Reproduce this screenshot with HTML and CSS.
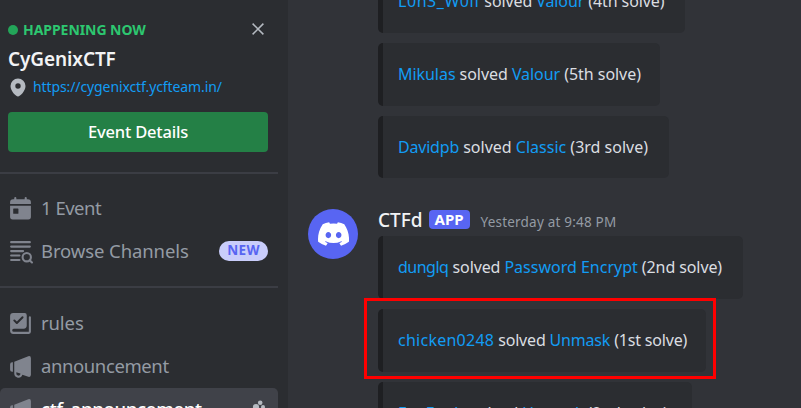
FILE: index.html
```html
<!DOCTYPE html>
<html lang="en">
<head>
<meta charset="utf-8">
<title>CyGenixCTF</title>
<link rel="stylesheet" href="styles.css">
</head>
<body>
<div class="app">
  <aside class="sidebar">
    <section class="event">
      <div class="event-status">
        <span class="dot"></span><span class="live">HAPPENING NOW</span>
        <svg class="close" viewBox="0 0 12 12"><path d="M.6.6l10.8 10.8M11.4.6L.6 11.4" fill="none" stroke="#b5bac1" stroke-width="1.5"/></svg>
      </div>
      <h2 class="event-name">CyGenixCTF</h2>
      <div class="event-place">
        <svg class="pin" viewBox="0 0 16 18"><path fill="#b5bac1" fill-rule="evenodd" d="M8 0a7.5 7.5 0 0 0-7.5 7.5C.5 12.600 6 18 8 18s7.500-5.400 7.500-10.500A7.500 7.500 0 0 0 8 0zm0 4.800a2.700 2.700 0 1 1 0 5.400 2.700 2.700 0 0 1 0-5.400z"/></svg>
        <a class="place-link">https://cygenixctf.ycfteam.in/</a>
      </div>
      <button class="details"><span>Event Details</span></button>
    </section>
    <nav class="group group-top">
      <div class="row">
        <svg class="icon" viewBox="0 0 24 24"><path fill="currentColor" fill-rule="evenodd" d="M7 1a1 1 0 0 1 1 1v1h8V2a1 1 0 1 1 2 0v1h1A3 3 0 0 1 22 6V7.700H2V6A3 3 0 0 1 5 3h1V2a1 1 0 0 1 1-1zM2 9.300h20V20a2.500 2.500 0 0 1-2.500 2.500h-15A2.500 2.500 0 0 1 2 20zM5.500 12a.5.5 0 0 0-.5.5v4a.5.5 0 0 0 .5.5h4a.5.5 0 0 0 .5-.5v-4a.5.5 0 0 0-.5-.5z"/></svg>
        <span class="label label-events">1 Event</span>
      </div>
      <div class="row">
        <svg class="icon" viewBox="0 0 24 24"><path d="M3 3h18M3 7.300h18M3 11.600h11.500M3 15.900h8M3 20.200h8" fill="none" stroke="currentColor" stroke-width="2" stroke-linecap="round"/><circle cx="18" cy="17.500" r="4" fill="none" stroke="currentColor" stroke-width="2"/><path d="M20.800 20.300L23 22.500" stroke="currentColor" stroke-width="2" stroke-linecap="round"/></svg>
        <span class="label label-browse">Browse Channels</span><span class="new">NEW</span>
      </div>
    </nav>
    <nav class="group group-channels">
      <div class="row">
        <svg class="icon" viewBox="0 0 24 24"><path fill="currentColor" fill-rule="evenodd" d="M5 2a3 3 0 0 0-3 3v14a3 3 0 0 0 3 3h15a2 2 0 0 0 2-2V6a1 1 0 1 0-2 0v14H5.500a1.500 1.500 0 0 1 0-3H15a3 3 0 0 0 3-3V4a2 2 0 0 0-2-2zm9.700 4.700a1 1 0 0 0-1.400-1.400L8.500 10.100 6.700 8.300a1 1 0 0 0-1.400 1.400l2.500 2.500a1 1 0 0 0 1.400 0z"/></svg>
        <span class="label label-rules">rules</span>
      </div>
      <div class="row">
        <svg class="icon" viewBox="0 0 24 24"><path fill="currentColor" fill-rule="evenodd" d="M19.500 2.100A2 2 0 0 1 22 4v16a2 2 0 0 1-2.500 1.900L13.800 20A4 4 0 0 1 6 18.800V7.500zM8 17.600v1.200a2 2 0 0 0 3.900.6v-.6zM4.700 8v9H4a2 2 0 0 1-2-2v-5a2 2 0 0 1 2-2z"/></svg>
        <span class="label label-ann">announcement</span>
      </div>
      <div class="row row-active">
        <svg class="icon" viewBox="0 0 24 24"><path fill="currentColor" fill-rule="evenodd" d="M19.500 2.100A2 2 0 0 1 22 4v16a2 2 0 0 1-2.500 1.900L13.800 20A4 4 0 0 1 6 18.800V7.500zM8 17.600v1.200a2 2 0 0 0 3.900.6v-.6zM4.700 8v9H4a2 2 0 0 1-2-2v-5a2 2 0 0 1 2-2z"/></svg>
        <span class="label label-active">ctf_announcement</span>
        <svg class="invite" viewBox="0 0 18 20"><g fill="#b5bac1"><circle cx="6" cy="7" r="3.100"/><circle cx="10.200" cy="2.700" r="2.300"/><circle cx="13" cy="7" r="2"/><path d="M0 17a6 6 0 0 1 12 0z"/></g></svg>
      </div>
    </nav>
  </aside>
  <main class="chat">
    <div class="embeds embeds-first">
      <div class="embed e1"><p><a>L0n3_W0lf</a> solved <a>Valour</a> (4th solve)</p></div>
      <div class="embed e2"><p><a>Mikulas</a> solved <a>Valour</a> (5th solve)</p></div>
      <div class="embed e3"><p><a>Davidpb</a> solved <a>Classic</a> (3rd solve)</p></div>
    </div>
    <article class="message">
      <div class="avatar"><svg viewBox="0 0 127 97"><path fill="#fff" d="M107.700 8.070A105 105 0 0 0 81.470 0a72 72 0 0 0-3.360 6.830 97.700 97.700 0 0 0-29.110 0A72 72 0 0 0 45.640 0a106 106 0 0 0-26.250 8.090C2.790 32.650-1.710 56.600.54 80.210a105.700 105.700 0 0 0 32.170 16.150 77.700 77.700 0 0 0 6.890-11.110 68.400 68.400 0 0 1-10.850-5.180c.91-.66 1.800-1.340 2.660-2a75.600 75.600 0 0 0 64.320 0c.87.71 1.760 1.390 2.660 2a68.700 68.700 0 0 1-10.870 5.190 77 77 0 0 0 6.890 11.100 105.300 105.300 0 0 0 32.190-16.140c2.640-27.380-4.510-51.110-18.900-72.150zM42.450 65.690c-6.270 0-11.450-5.690-11.450-12.690s5-12.740 11.430-12.740S54 46 53.890 53s-5.050 12.690-11.440 12.690zm42.240 0c-6.280 0-11.440-5.690-11.440-12.690s5-12.740 11.440-12.740S96.230 46 96.120 53s-5.040 12.690-11.430 12.690z"/></svg></div>
      <div class="message-body">
        <header class="message-head"><span class="author">CTFd</span><span class="app-tag">APP</span><time>Yesterday at 9:48 PM</time></header>
        <div class="embeds">
          <div class="embed e4"><p><a>dunglq</a> solved <a>Password Encrypt</a> (2nd solve)</p></div>
          <div class="embed e5"><p><a>chicken0248</a> solved <a>Unmask</a> (1st solve)</p><span class="highlight"></span></div>
          <div class="embed e6"><p><a>FunFrydy</a> solved <a>Unmask</a> (2nd solve)</p></div>
        </div>
      </div>
    </article>
  </main>
</div>
</body>
</html>
```
FILE: styles.css
```css
* { box-sizing: border-box; }
body { margin: 0; background: #313338; font-family: "Noto Sans", sans-serif; color: #dbdee1; }
.app { display: flex; width: 801px; height: 408px; overflow: hidden; }
.sidebar { flex: 0 0 288px; background: #2b2d31; height: 408px; overflow: hidden; }
.event { padding: 20px 10px 0 8px; height: 174px; border-bottom: 2px solid #3b3d44; width: 278px; }
.event-status { display: flex; align-items: center; height: 20px; }
.dot { width: 10px; height: 10px; border-radius: 50%; background: #23a559; margin-right: 5px; }
.live { font-size: 14px; font-weight: 700; color: #2dc770; letter-spacing: -.05px; margin-top: -2px; }
.close { width: 12px; height: 12px; margin-left: auto; margin-right: 4px; position: relative; top: -1px; }
.event-name { margin: 6px 0 0; font-size: 19px; line-height: 26px; font-weight: 600; color: #f2f3f5; letter-spacing: -.1px; }
.event-place { display: flex; align-items: center; height: 26px; margin-top: 2px; }
.pin { width: 16px; height: 19px; margin: 0 7px 0 2px; }
a { color: #129cf4; }
.place-link { font-size: 14px; letter-spacing: -.1px; margin-top: -2px; }
.details { display: block; width: 260px; height: 40px; margin: 12px 0 0; padding: 0 0 2px; border: 0; border-radius: 4px; background: #248046; color: #fff; font: 500 16.500px "Noto Sans", sans-serif; letter-spacing: -.2px; }
.group { width: 278px; }
.group-top { height: 114px; padding-top: 13px; border-bottom: 2px solid #3b3d44; }
.group-channels { padding-top: 14px; }
.row { display: flex; align-items: center; height: 43px; padding: 0 10px 0 8px; color: #80848e; }
.icon { width: 25px; height: 25px; margin-right: 8px; flex: none; }
.label { font-size: 18.500px; color: #949ba4; white-space: nowrap; margin-top: -3px; }
.label-events { letter-spacing: -.5px; }
.label-browse { letter-spacing: -.1px; }
.label-rules { letter-spacing: -.1px; }
.label-ann { letter-spacing: -.4px; }
.new { margin-left: auto; margin-top: -1px; width: 49px; height: 20px; border-radius: 10px; background: #c9cdfb; color: #5865f2; font-size: 13.500px; line-height: 19px; font-weight: 700; text-align: center; letter-spacing: .3px; }
.row-active { background: #404249; border-radius: 5px; }
.label-active { color: #fff; font-weight: 500; letter-spacing: -.3px; }
.invite { width: 18px; height: 20px; margin-left: auto; }
.chat { flex: 1; padding-left: 20px; min-width: 0; }
.embeds { display: flex; flex-direction: column; align-items: flex-start; gap: 10px; }
.embeds-first { margin: -30px 0 0 70px; }
.embed { position: relative; flex: none; height: 62.800px; border-left: 5px solid #1e1f22; border-radius: 5px; background: #2b2d31; padding-left: 15px; }
.embed p { margin: 0; font-size: 16px; line-height: 62px; white-space: nowrap; letter-spacing: -.1px; }
.e1 { width: 307px; } .e2 { width: 282px; } .e3 { width: 291px; }
.e4 { width: 365px; } .e5 { width: 328px; } .e6 { width: 314px; }
.e1 a:first-child { letter-spacing: .55px; }
.e2 p { letter-spacing: -.05px; }
.e3 p { letter-spacing: 0; }
.e3 a:first-child { letter-spacing: -.2px; }
.e4 a:first-child { letter-spacing: -.5px; }
.e4 a:last-child { letter-spacing: 0; }
.e5 p { letter-spacing: -.18px; }
.e5 a:first-child { letter-spacing: .25px; }
.message { display: flex; margin-top: 30px; }
.avatar { width: 50px; height: 50px; border-radius: 50%; background: #5865f2; display: grid; place-items: center; margin: .5px 20px 0 0; flex: none; }
.avatar svg { width: 31px; height: 24px; }
.message-head { display: flex; align-items: center; height: 28px; padding-bottom: 5px; }
.author { font-size: 19px; font-weight: 500; color: #f2f3f5; }
.app-tag { width: 41px; height: 19px; margin: 0 11px 0 6px; border-radius: 4px; background: #5865f2; color: #fff; font-size: 15px; line-height: 18px; font-weight: 700; text-align: center; }
time { font-size: 13.500px; color: #949ba4; white-space: nowrap; letter-spacing: .2px; margin-top: 4px; }
.highlight { position: absolute; left: -19px; top: -11px; width: 352px; height: 81px; border: 3px solid #ff0000; }
```
